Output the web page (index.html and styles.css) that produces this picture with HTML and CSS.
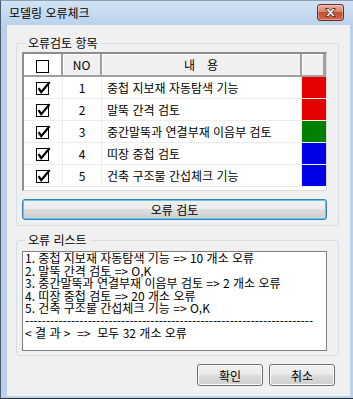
FILE: index.html
```html
<!DOCTYPE html>
<html lang="ko">
<head>
    <meta charset="UTF-8">
    <title>모델링 오류체크</title>
    <link rel="stylesheet" href="styles.css">
</head>
<body>

<div class="window">
    <div class="titlebar">
        <span class="title">모델링 오류체크</span>
        <button class="close-btn" title="닫기">
            <svg width="11" height="9" viewBox="0 0 11 9">
                <path d="M0.5 0.5h3l2 2.4l2-2.4h3l-3.4 4l3.4 4h-3l-2-2.4l-2 2.4h-3l3.4-4z" fill="#fff" stroke="#4a1a12" stroke-width="0.8" stroke-linejoin="round"/>
            </svg>
        </button>
    </div>

    <div class="frame">
        <div class="client">

            <fieldset class="group group-check">
                <legend>오류검토 항목</legend>

                <div class="list-frame">
                    <div class="list-row list-head">
                        <div class="cell cell-check head-first">
                            <svg class="chk" width="15" height="14" viewBox="0 0 15 14">
                                <rect x="0.5" y="0.5" width="12" height="12" fill="#fff" stroke="#000"/>
                            </svg>
                        </div>
                        <div class="cell cell-no">NO</div>
                        <div class="cell cell-name">내&emsp;용</div>
                        <div class="cell cell-color"></div>
                    </div>

                    <div class="list-row">
                        <div class="cell cell-check"><svg class="chk" width="15" height="14" viewBox="0 0 15 14"><rect x="0.5" y="1.5" width="12" height="12" fill="#fff" stroke="#000"/><path d="M2.6 7.2L5.2 11.2L13.6 1.2" fill="none" stroke="#000" stroke-width="2.2"/></svg></div>
                        <div class="cell cell-no">1</div>
                        <div class="cell cell-name">중첩 지보재 자동탐색 기능</div>
                        <div class="cell cell-color red"></div>
                    </div>
                    <div class="list-row">
                        <div class="cell cell-check"><svg class="chk" width="15" height="14" viewBox="0 0 15 14"><rect x="0.5" y="1.5" width="12" height="12" fill="#fff" stroke="#000"/><path d="M2.6 7.2L5.2 11.2L13.6 1.2" fill="none" stroke="#000" stroke-width="2.2"/></svg></div>
                        <div class="cell cell-no">2</div>
                        <div class="cell cell-name">말뚝 간격 검토</div>
                        <div class="cell cell-color red"></div>
                    </div>
                    <div class="list-row">
                        <div class="cell cell-check"><svg class="chk" width="15" height="14" viewBox="0 0 15 14"><rect x="0.5" y="1.5" width="12" height="12" fill="#fff" stroke="#000"/><path d="M2.6 7.2L5.2 11.2L13.6 1.2" fill="none" stroke="#000" stroke-width="2.2"/></svg></div>
                        <div class="cell cell-no">3</div>
                        <div class="cell cell-name">중간말뚝과 연결부재 이음부 검토</div>
                        <div class="cell cell-color green"></div>
                    </div>
                    <div class="list-row">
                        <div class="cell cell-check"><svg class="chk" width="15" height="14" viewBox="0 0 15 14"><rect x="0.5" y="1.5" width="12" height="12" fill="#fff" stroke="#000"/><path d="M2.6 7.2L5.2 11.2L13.6 1.2" fill="none" stroke="#000" stroke-width="2.2"/></svg></div>
                        <div class="cell cell-no">4</div>
                        <div class="cell cell-name">띠장 중첩 검토</div>
                        <div class="cell cell-color blue"></div>
                    </div>
                    <div class="list-row">
                        <div class="cell cell-check"><svg class="chk" width="15" height="14" viewBox="0 0 15 14"><rect x="0.5" y="1.5" width="12" height="12" fill="#fff" stroke="#000"/><path d="M2.6 7.2L5.2 11.2L13.6 1.2" fill="none" stroke="#000" stroke-width="2.2"/></svg></div>
                        <div class="cell cell-no">5</div>
                        <div class="cell cell-name">건축 구조물 간섭체크 기능</div>
                        <div class="cell cell-color blue"></div>
                    </div>
                </div>

                <button class="btn btn-default btn-wide">오류 검토</button>
            </fieldset>

            <fieldset class="group group-result">
                <legend>오류 리스트</legend>
                <div class="result-box">
                    <div class="line">1. 중첩 지보재 자동탐색 기능 =&gt; 10 개소 오류</div>
                    <div class="line">2. 말뚝 간격 검토 =&gt; O,K</div>
                    <div class="line">3. 중간말뚝과 연결부재 이음부 검토 =&gt; 2 개소 오류</div>
                    <div class="line">4. 띠장 중첩 검토 =&gt; 20 개소 오류</div>
                    <div class="line">5. 건축 구조물 간섭체크 기능 =&gt; O,K</div>
                    <div class="line">---------------------------------------------------------------------</div>
                    <div class="line">&lt; 결 과 &gt;&nbsp;&nbsp;=&gt;&nbsp;&nbsp;모두 32 개소 오류</div>
                </div>
            </fieldset>

            <div class="dialog-buttons">
                <button class="btn">확인</button>
                <button class="btn">취소</button>
            </div>

        </div>
    </div>
</div>

</body>
</html>
```

FILE: styles.css
```css
* {
    box-sizing: border-box;
}
body {
    margin: 0;
    font-family: "Noto Sans CJK KR", "Noto Sans", sans-serif;
    font-size: 12px;
    color: #000;
    background: #fff;
}
.window {
    width: 353px;
    height: 399px;
    display: flex;
    flex-direction: column;
    border-top: 1px solid #8aa1ba;
    border-left: 1px solid #4d5d70;
    border-bottom: 1px solid #2c2c2c;
    background: #b9d1ea;
}
.titlebar {
    height: 24px;
    display: flex;
    justify-content: space-between;
    align-items: flex-start;
    padding: 0 9px 0 8px;
    background: linear-gradient(#d3e2f3, #bad2eb);
}
.title {
    line-height: 24px;
    padding-bottom: 1px;
}
.close-btn {
    margin-top: 3px;
    width: 27px;
    height: 17px;
    padding: 0;
    display: flex;
    align-items: center;
    justify-content: center;
    border: 1px solid #6e2b1e;
    border-radius: 3px;
    background: linear-gradient(#eab1a3 0%, #d8806b 45%, #c54d33 50%, #d2674c 100%);
    box-shadow: inset 0 0 0 1px rgba(255, 255, 255, 0.35);
}
.frame {
    flex: 1;
    padding: 0 3px 2px 6px;
}
.client {
    height: 100%;
    background: #f0f0f0;
    display: flex;
    flex-direction: column;
}

/* group boxes */
.group {
    min-width: 0;
    margin: 0 11px 0 9px;
    padding: 2px 11px 5px 5px;
    border: 1px solid #d5dfe5;
    border-radius: 3px;
}
.group legend {
    margin-left: 3px;
    padding: 0 3px;
    line-height: 14px;
}
.group-check {
    margin-top: 11px;
}
.group-result {
    margin-top: 7px;
    padding-top: 4px;
    padding-bottom: 4px;
}

/* check list */
.list-frame {
    height: 139px;
    background: #fff;
    border-style: solid;
    border-width: 2px 1px 1px 2px;
    border-color: #8e8e8e #dadada #dadada #8e8e8e;
}
.list-row {
    display: grid;
    grid-template-columns: 39px 39px 200px 24px;
    height: 22px;
}
.cell {
    display: flex;
    align-items: center;
    border-right: 1px solid #ececec;
    border-bottom: 1px solid #ececec;
    white-space: nowrap;
}
.cell-check, .cell-no {
    justify-content: center;
}
.cell-name {
    padding-left: 5px;
}
.cell-color {
    border-right: none;
    border-bottom-color: #f0f0f0;
}
.list-head {
    height: 23px;
}
.list-head .cell {
    background: #f0f0f0;
    border-right: 2px solid #a0a0a0;
    border-bottom: 2px solid #a0a0a0;
    box-shadow: inset 1px 1px 0 #fff;
}
.list-head .head-first {
    background: #fff;
    padding-top: 4px;
}
.list-head .cell-name {
    justify-content: center;
    padding-left: 0;
}
.list-head .cell-color {
    border-right: 3px solid #a0a0a0;
}
.chk {
    display: block;
    margin-left: 1px;
}
.red {
    background: #e60000;
}
.green {
    background: #008000;
}
.blue {
    background: #0000e6;
}

/* buttons */
.btn {
    font-family: inherit;
    font-size: 12px;
    color: #000;
    padding: 0;
    border: 1px solid #707070;
    border-radius: 3px;
    background: linear-gradient(#f2f2f2 0%, #ebebeb 45%, #dddddd 50%, #cfcfcf 100%);
    box-shadow: inset 0 0 0 1px #fbfbfb;
}
.btn-default {
    border-color: #3c7fb1;
    box-shadow: inset 0 0 0 1px #5ccaf5;
}
.btn-wide {
    display: block;
    width: 100%;
    height: 21px;
    margin-top: 8px;
}
.dialog-buttons {
    display: flex;
    justify-content: flex-end;
    gap: 6px;
    margin: 8px 15px 0 0;
}
.dialog-buttons .btn {
    width: 66px;
    height: 22px;
}

/* result list */
.result-box {
    height: 100px;
    background: #fff;
    border: 1px solid #7f7f7f;
    padding: 0 2px;
}
.line {
    line-height: 12.5px;
    white-space: pre;
}
```
